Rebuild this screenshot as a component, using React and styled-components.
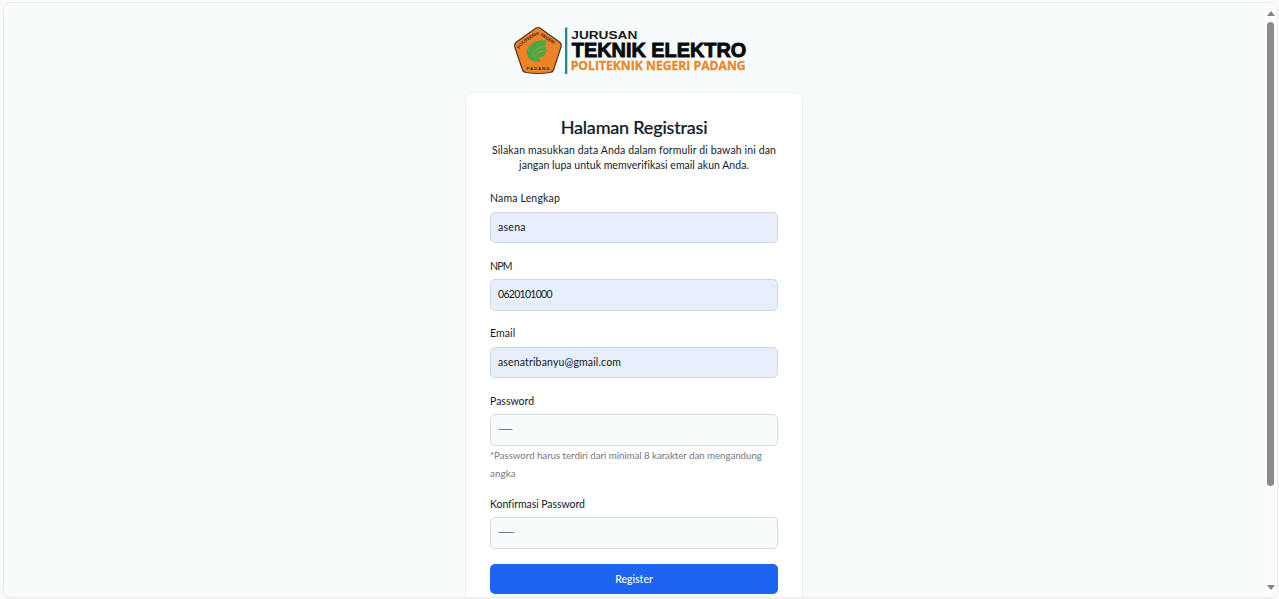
import React from 'react';
import styled, { createGlobalStyle } from 'styled-components';

const Global = createGlobalStyle`
  * { box-sizing: border-box; }
  html, body, #root { height: 100%; margin: 0; overflow: hidden; }
  body { background: #fafafa; font-family: Lato, "Open Sans", sans-serif; color: #111c2d; }
`;

const Frame = styled.div`
  height: 599px;
  padding: 3px 2px 2px 4px;
`;
const Viewport = styled.div`
  display: flex;
  height: 594px;
  overflow: hidden;
  border-radius: 7px;
  background: #f8fbfc;
  box-shadow: 0 0 0 1px #ededed, 0 1px 2px rgba(0, 0, 0, 0.14);
`;
const Page = styled.main`
  flex: 1;
  display: flex;
  flex-direction: column;
  align-items: center;
  padding-top: 22px;
`;
const LogoSvg = styled.svg`
  display: block;
  flex: none;
  width: 240px;
  height: 52px;
  margin-right: 8px;
  overflow: visible;
`;
const Card = styled.section`
  flex: none;
  width: 336px;
  height: 530px;
  margin-top: 16px;
  padding: 22px 24px 0;
  border-radius: 6px;
  background: #fff;
  box-shadow: 0 0 2px rgba(40, 70, 90, 0.2);
`;
const Title = styled.h1`
  margin: 0;
  font-size: 18px;
  line-height: 24px;
  font-weight: 500;
  letter-spacing: ${(p) => p.$spacing}px;
  text-align: center;
  -webkit-text-stroke: 0.2px currentColor;
`;
const Intro = styled.p`
  margin: 4px -4px 18px;
  font-size: 10.5px;
  line-height: 15px;
  text-align: center;
  white-space: nowrap;
`;
const Line = styled.span`
  display: block;
  letter-spacing: ${(p) => p.$spacing}px;
`;
const Field = styled.div`
  margin-bottom: ${(p) => p.$gap ?? 15.5}px;
`;
const Label = styled.label`
  display: block;
  height: 14px;
  margin-bottom: 6.5px;
  font-size: 10.5px;
  line-height: 14px;
  letter-spacing: ${(p) => p.$spacing}px;
`;
const Input = styled.input`
  display: block;
  width: 100%;
  height: 31.5px;
  padding: 0 7px 1px;
  border: 1px solid ${(p) => (p.$filled ? '#cfd9e5' : '#d3dbe2')};
  border-radius: 5px;
  outline: none;
  background: ${(p) => (p.$filled ? '#e7effc' : '#f8fbfc')};
  color: #101820;
  font: 10.5px Lato, sans-serif;
  letter-spacing: ${(p) => p.$valueSpacing}px;
  &::placeholder { color: #6b747e; opacity: 1; }
`;
const Help = styled.p`
  margin: 0 0 15px;
  font-size: 9.75px;
  line-height: 18px;
  color: #727b82;
  white-space: nowrap;
`;
const Button = styled.button`
  display: block;
  width: 100%;
  height: 30px;
  padding: 0;
  border: 0;
  border-radius: 5px;
  background: #1c64f2;
  color: #fff;
  font: 500 10.5px Lato, sans-serif;
  letter-spacing: 0;
`;
const Scrollbar = styled.div`
  display: flex;
  flex-direction: column;
  align-items: center;
  width: 13px;
  padding: 8px 0 7px;
  background: #fcfcfc;
`;
const Arrow = styled.div`
  border: 4px solid transparent;
  border-top-width: ${(p) => (p.$down ? 5 : 0)}px;
  border-bottom-width: ${(p) => (p.$down ? 0 : 5)}px;
  border-${(p) => (p.$down ? 'top' : 'bottom')}-color: #858585;
`;
const Thumb = styled.div`
  width: 7px;
  height: 464px;
  margin: 6px 0 auto;
  border-radius: 4px;
  background: #8b8b8b;
`;

function Logo() {
  return (
    <LogoSvg viewBox="510 25 240 52" role="img" aria-label="Jurusan Teknik Elektro Politeknik Negeri Padang">
      <defs>
        <path id="crest-top" d="M519.5 49Q521 45 525 42.5L535 35.8Q538 34 541 35.8L551 42.5Q555 45 557 49" />
        <path id="crest-bottom" d="M522 70H554" />
      </defs>
      <path d="M536 28Q538 27 540 28L559.5 42Q562 44 561 47L553.5 70Q553 72 550 72.5Q538 74.5 526 72.5Q523 72 522.5 70L514.8 47Q514 44 516.5 42Z" fill="#ef8127" stroke="#49392a" strokeWidth="1.2" />
      <path d="M526.5 53Q527.5 46 533.5 42.5Q539 39.5 546.5 40.5L545 46.5L547.5 51L544 56L538.5 57.5L541 61.5Q529 63.5 526.5 53Z" fill="#4aa746" />
      <path d="M533 56.5Q532.5 50.5 539 48L545.5 46M535.5 57Q536 52.5 541 51.5L547 50.5" fill="none" stroke="#dc8e35" strokeWidth="0.8" />
      <g fill="#3a291c" fontFamily="Liberation Sans" fontWeight="700">
        <text fontSize="4.3"><textPath href="#crest-top" textLength="42">POLITEKNIK NEGERI</textPath></text>
        <text fontSize="4.4"><textPath href="#crest-bottom" startOffset="4.5" textLength="23">PADANG</textPath></text>
      </g>
      <rect x="565" y="27.5" width="2.3" height="46.5" fill="#2a858c" />
      <g fontFamily="Liberation Sans" fontWeight="700">
        <text x="571.3" y="38.8" fontSize="10.8" textLength="66" lengthAdjust="spacingAndGlyphs" fill="#171b1d">JURUSAN</text>
        <text x="571.8" y="56.8" fontSize="20" textLength="174.5" lengthAdjust="spacingAndGlyphs" fill="#080b0c" stroke="#080b0c" strokeWidth="0.9">TEKNIK ELEKTRO</text>
        <text x="570.7" y="70" fontSize="12.8" fontFamily="Open Sans" textLength="175" lengthAdjust="spacingAndGlyphs" fill="#e58a2e" stroke="#e58a2e" strokeWidth="0.35">POLITEKNIK NEGERI PADANG</text>
      </g>
    </LogoSvg>
  );
}

const fields = [
  { id: 'name', label: 'Nama Lengkap', value: 'asena', spacing: 0.17, valueSpacing: 0.3 },
  { id: 'npm', label: 'NPM', value: '0620101000', spacing: -0.8, valueSpacing: -0.7 },
  { id: 'email', label: 'Email', value: 'asenatribanyu@gmail.com', spacing: 0.1, valueSpacing: 0.15 },
];

export default function App() {
  return (
    <>
      <Global />
      <Frame>
        <Viewport>
          <Page>
            <Logo />
            <Card>
              <Title $spacing={-0.2}>Halaman Registrasi</Title>
              <Intro>
                <Line $spacing={0.13}>Silakan masukkan data Anda dalam formulir di bawah ini dan</Line>
                <Line $spacing={0.02}>jangan lupa untuk memverifikasi email akun Anda.</Line>
              </Intro>
              {fields.map((f) => (
                <Field key={f.id}>
                  <Label htmlFor={f.id} $spacing={f.spacing}>{f.label}</Label>
                  <Input id={f.id} defaultValue={f.value} $filled $valueSpacing={f.valueSpacing} />
                </Field>
              ))}
              <Field $gap={0}>
                <Label htmlFor="password" $spacing={0}>Password</Label>
                <Input id="password" placeholder="------" $valueSpacing={-1.7} />
              </Field>
              <Help>
                <Line $spacing={-0.06}>*Password harus terdiri dari minimal 8 karakter dan mengandung</Line>
                <Line $spacing={0.1}>angka</Line>
              </Help>
              <Field $gap={15}>
                <Label htmlFor="confirm" $spacing={-0.06}>Konfirmasi Password</Label>
                <Input id="confirm" placeholder="-------" $valueSpacing={-1.8} />
              </Field>
              <Button type="button">Register</Button>
            </Card>
          </Page>
          <Scrollbar>
            <Arrow />
            <Thumb />
            <Arrow $down />
          </Scrollbar>
        </Viewport>
      </Frame>
    </>
  );
}
